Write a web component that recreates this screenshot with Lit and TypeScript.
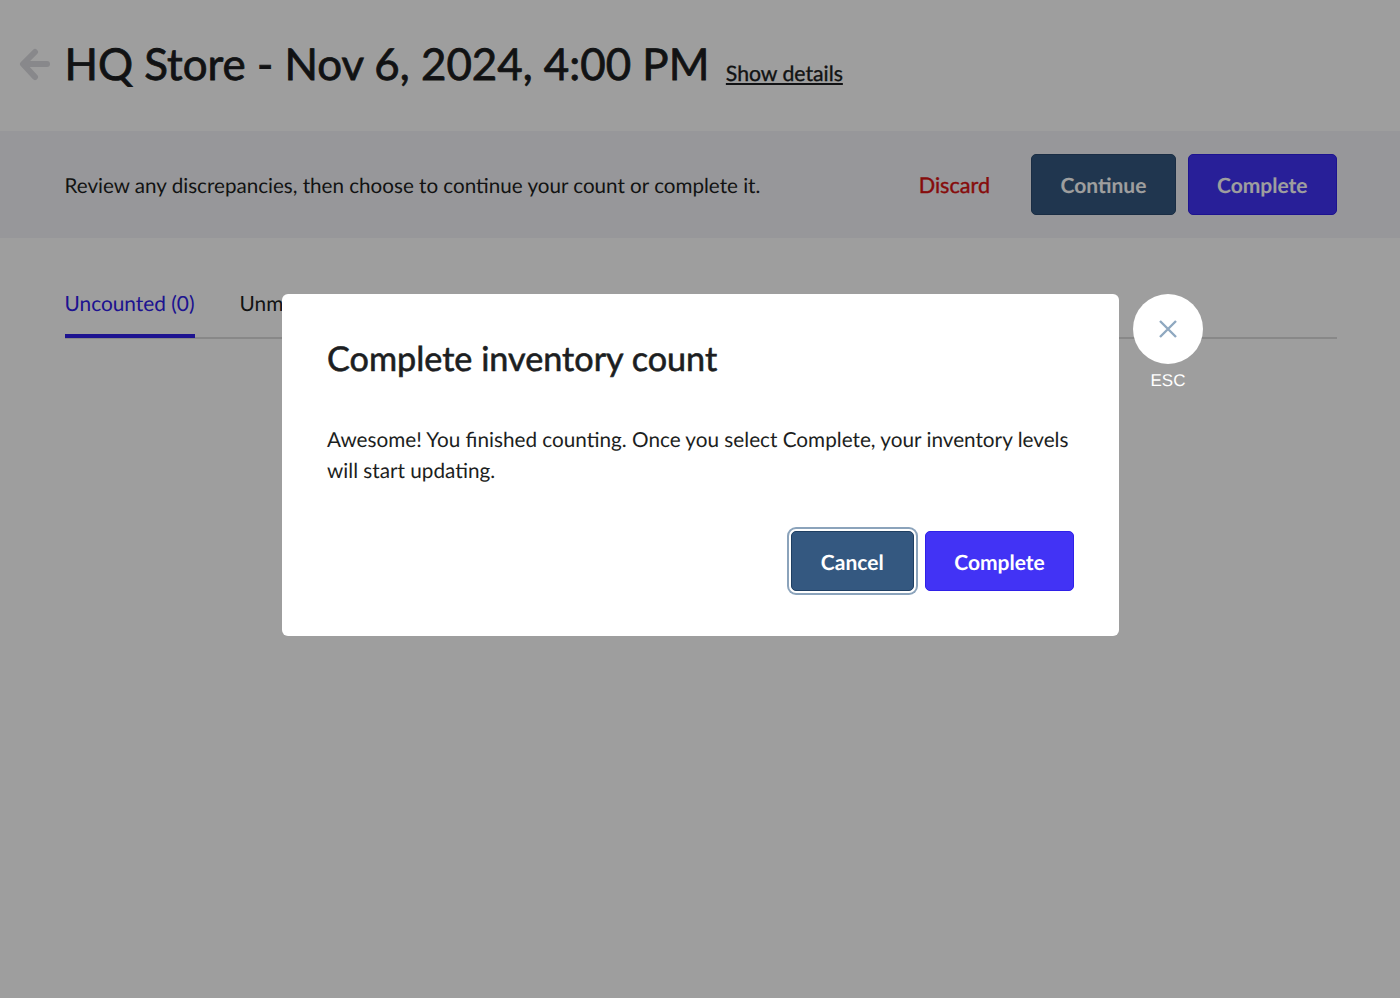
import { LitElement, html, css } from "lit";
import { customElement } from "lit/decorators.js";

@customElement("app-root")
export class AppRoot extends LitElement {
  static styles = css`
    :host { display: block; position: relative; height: 998px; overflow: hidden; background: #fff; font-family: Lato, "Liberation Sans", sans-serif; color: #1c1e21; text-rendering: geometricPrecision; }
    .head { height: 131px; box-sizing: border-box; padding: 0 0 4px 19px; display: flex; align-items: center; }
    .back { width: 32px; height: 36px; margin-right: 13.5px; display: block; }
    h1 { margin: 0; font-size: 43.85px; line-height: 54px; font-weight: 400; -webkit-text-stroke: 0.8px #1c1e21; white-space: nowrap; }
    .details { margin: 18px 0 0 16.5px; font-size: 21.2px; -webkit-text-stroke: 0.35px #1c1e21; text-decoration: underline; color: #1c1e21; }
    .bar { height: 107px; box-sizing: border-box; background: #f4f4f8; padding: 0 63px 0 64.5px; display: flex; align-items: center; }
    .bar p { margin: 2px 0 0; font-size: 20.62px; flex: 1; }
    .discard { margin: 0 41px 0 0; color: #d81414; font-size: 21.6px; -webkit-text-stroke: 0.4px #d81414; }
    .btn { box-sizing: border-box; height: 61px; display: flex; align-items: center; justify-content: center; border-radius: 5px; color: #fff; font-size: 21px; font-weight: 700; font-family: inherit; padding: 2px 0 0; }
    .navy { background: #345880; border: 1px solid #2a4a6e; }
    .blue { background: #4233f5; border: 1px solid #2f20e8; }
    .bar .navy { width: 145px; margin-right: 11.5px; }
    .bar .blue { width: 149.5px; }
    .tabs { margin: 42px 63px 0 64.5px; height: 59px; border-bottom: 2px solid #dcdcdc; display: flex; gap: 45px; box-sizing: border-box; }
    .tab { font-size: 20.85px; line-height: 47px; height: 58px; box-sizing: border-box; white-space: nowrap; }
    .tab.on { color: #2f20e8; border-bottom: 4px solid #2f20e8; }
    .scrim { position: absolute; inset: 0; background: rgba(0, 0, 0, 0.38); }
    .modal { position: absolute; left: 282px; top: 294px; width: 837px; height: 342px; box-sizing: border-box; padding: 44px 45px 45px; background: #fff; border-radius: 6px; display: flex; flex-direction: column; }
    h2 { margin: 0; font-size: 34.2px; line-height: 42px; font-weight: 400; -webkit-text-stroke: 0.6px #1c1e21; }
    .modal p { margin: 44.5px 0 0; font-size: 20.72px; line-height: 31px; }
    .actions { margin-top: auto; display: flex; justify-content: flex-end; gap: 11.5px; align-items: center; }
    .actions .navy { width: 122.5px; height: 60px; background: #345880; border: 1px solid #1f3f62; box-shadow: 0 0 0 2px #fff, 0 0 0 4px #8ba3bb; }
    .actions .blue { width: 149px; height: 60px; }
    .close { position: absolute; left: 1133px; top: 294px; width: 70px; display: flex; flex-direction: column; align-items: center; }
    .circle { width: 70px; height: 70px; border-radius: 50%; background: #fff; display: flex; align-items: center; justify-content: center; }
    .esc { margin-top: 7px; color: #fff; font: 17px/20px "Liberation Sans", Arial, sans-serif; }
  `;

  render() {
    return html`
      <div class="head">
        <svg class="back" viewBox="0 0 32 36" fill="none" stroke="#dcdce0" stroke-width="6" stroke-linecap="round" stroke-linejoin="round"><path d="M16 6 4 18l12 13M5 18h23"/></svg>
        <h1>HQ Store - Nov 6, 2024, 4:00 PM</h1>
        <span class="details">Show details</span>
      </div>
      <div class="bar">
        <p>Review any discrepancies, then choose to continue your count or complete it.</p>
        <span class="discard">Discard</span>
        <div class="btn navy">Continue</div>
        <div class="btn blue">Complete</div>
      </div>
      <div class="tabs">
        <div class="tab on">Uncounted (0)</div>
        <div class="tab">Unmatched</div>
      </div>
      <div class="scrim"></div>
      <div class="modal">
        <h2>Complete inventory count</h2>
        <p>Awesome! You finished counting. Once you select Complete, your inventory levels will start updating.</p>
        <div class="actions">
          <div class="btn navy">Cancel</div>
          <div class="btn blue">Complete</div>
        </div>
      </div>
      <div class="close">
        <div class="circle">
          <svg width="22" height="22" viewBox="0 0 22 22" fill="none" stroke="#8fa8c0" stroke-width="2.4"><path d="M3 3l16 16M19 3 3 19"/></svg>
        </div>
        <div class="esc">ESC</div>
      </div>
    `;
  }
}
